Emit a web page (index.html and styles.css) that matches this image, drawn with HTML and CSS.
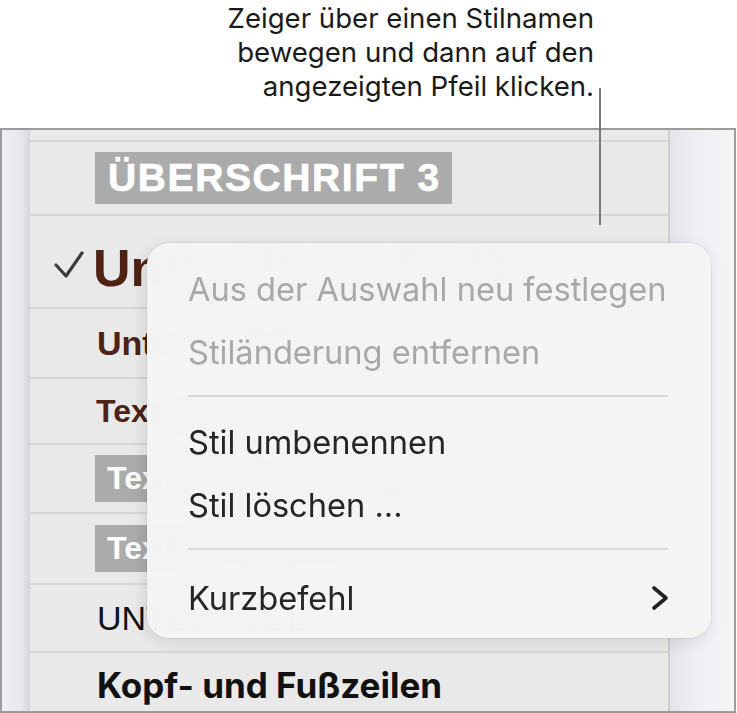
FILE: index.html
```html
<!DOCTYPE html>
<html lang="de">
<head>
	<meta charset="UTF-8">
	<title>Absatzstile</title>
	<link rel="stylesheet" href="styles.css">
</head>
<body>
	<div class="page">
		<p class="callout">Zeiger über einen Stilnamen<br>bewegen und dann auf den<br>angezeigten Pfeil klicken.</p>
		<span class="leader"></span>

		<div class="panel">
			<div class="gutter"></div>
			<ul class="styles">
				<li class="row row-cut"></li>
				<li class="row"><span class="tag tag-h3">ÜBERSCHRIFT 3</span></li>
				<li class="row row-current">
					<svg class="check" width="30" height="28" viewBox="0 0 30 28">
						<path d="M2 14 L12 25 L28 2" fill="none" stroke="#3b3b3b" stroke-width="3.2" stroke-linecap="round" stroke-linejoin="round"/>
					</svg>
					<span class="st-sub1">Unterüberschrift</span>
				</li>
				<li class="row"><span class="st-sub2">Unterüberschrift 2</span></li>
				<li class="row"><span class="st-text">Textkörper</span></li>
				<li class="row"><span class="tag tag-small">Text hervorgehoben</span></li>
				<li class="row"><span class="tag tag-small">Textkörper klein</span></li>
				<li class="row"><span class="st-caps">UNTERTITEL</span></li>
				<li class="row row-last"><span class="st-head">Kopf- und Fußzeilen</span></li>
			</ul>
			<div class="side"></div>
		</div>

		<div class="menu">
			<div class="item off">Aus der Auswahl neu festlegen</div>
			<div class="item off">Stiländerung entfernen</div>
			<div class="sep"></div>
			<div class="item">Stil umbenennen</div>
			<div class="item">Stil löschen ...</div>
			<div class="sep sep-2"></div>
			<div class="item">
				Kurzbefehl
				<svg class="chev" width="18" height="26" viewBox="0 0 18 26">
					<path d="M3 3 L15 13 L3 23" fill="none" stroke="#222" stroke-width="3.6" stroke-linecap="round" stroke-linejoin="round"/>
				</svg>
			</div>
		</div>
	</div>
</body>
</html>
```

FILE: styles.css
```css
*{
	box-sizing: border-box;
}
body{
	margin: 0;
	background: #fff;
	font-family: Inter, "Noto Sans", sans-serif;
	color: #1d1d1d;
}
.page{
	position: relative;
	width: 737px;
	height: 713px;
	overflow: hidden;
}

/* Beschriftung oben */
.callout{
	margin: 0;
	height: 128px;
	width: 594px;
	padding-top: 1px;
	text-align: right;
	font-size: 27.6px;
	line-height: 34px;
	color: #1a1a1a;
}
.leader{
	position: absolute;
	left: 599px;
	top: 88px;
	width: 2px;
	height: 137px;
	background: #7a7a7a;
	z-index: 5;
}

/* Fenster mit Stilliste */
.panel{
	display: flex;
	width: 736px;
	height: 585px;
	border: 2px solid #9c9c9c;
	background: #e9e9e9;
}
.gutter{
	width: 28px;
	background: linear-gradient(to right, #eef0f3 0%, #e6e7eb 70%, #d4d5d9 100%);
}
.side{
	flex: 1;
	border-left: 2px solid #cfcfcf;
	background: linear-gradient(to right, #e3e4e7 0%, #eff0f3 45%, #f4f5f7 100%);
}
.styles{
	width: 638px;
	margin: 0;
	padding: 0;
	list-style: none;
	background: #e9e9e9;
}
.row{
	display: flex;
	align-items: center;
	padding-left: 65px;
	border-bottom: 2px solid #d6d6d6;
	white-space: nowrap;
	overflow: hidden;
}
.row:nth-child(1){ height: 12px; }
.row:nth-child(2){ height: 74px; }
.row:nth-child(3){ height: 93px; }
.row:nth-child(4){ height: 70px; }
.row:nth-child(5){ height: 66px; }
.row:nth-child(6){ height: 69px; }
.row:nth-child(7){ height: 71px; }
.row:nth-child(8){ height: 68px; }
.row-last{
	height: 58px;
	border-bottom: none;
	padding-top: 6px;
}
.row-current{
	padding-left: 24px;
	padding-top: 12px;
}
.check{
	margin-right: 11px;
	margin-top: -6px;
}

.tag{
	background: #ababab;
	color: #fff;
	font-family: "Liberation Sans", Arial, sans-serif;
	font-weight: 700;
}
.tag-h3{
	height: 52px;
	line-height: 52px;
	padding: 0 11px 0 13px;
	font-size: 39px;
	letter-spacing: 1.6px;
	-webkit-text-stroke: 0.7px #fff;
}
.tag-small{
	height: 47px;
	line-height: 47px;
	padding: 0 12px;
	font-size: 32px;
}
.st-sub1,.st-sub2,.st-text{
	color: #4e2214;
	font-family: "Liberation Sans", Arial, sans-serif;
	font-weight: 700;
}
.st-sub1{
	font-size: 52px;
	margin-left: -2px;
}
.st-sub2{
	font-size: 34px;
	margin-left: 2px;
}
.st-text{
	font-size: 32px;
	margin-left: 1px;
}
.st-caps{
	font-size: 34px;
	margin-left: 2px;
	color: #111;
	font-family: "Liberation Sans", Arial, sans-serif;
}
.st-head{
	font-size: 35px;
	margin-left: 2px;
	font-weight: 700;
	color: #111;
}

/* Kontextmenü */
.menu{
	position: absolute;
	left: 147px;
	top: 243px;
	width: 564px;
	height: 395px;
	padding: 14px 40px 0 41px;
	border-radius: 22px;
	background: rgba(244, 244, 244, 0.985);
	backdrop-filter: blur(20px);
	box-shadow: 0 0 0 1px rgba(0, 0, 0, 0.06), -2px 4px 16px rgba(0, 0, 0, 0.1);
	z-index: 10;
}
.item{
	display: flex;
	align-items: center;
	justify-content: space-between;
	height: 63px;
	font-size: 32.6px;
	white-space: nowrap;
	color: #262626;
}
.item.off{
	color: #a8a8a8;
}
.sep{
	height: 2px;
	margin: 12px 3px 13px 0;
	background: #d9d9d9;
}
.sep-2{
	margin-bottom: 16px;
}
.chev{
	margin-right: 2px;
}
```
